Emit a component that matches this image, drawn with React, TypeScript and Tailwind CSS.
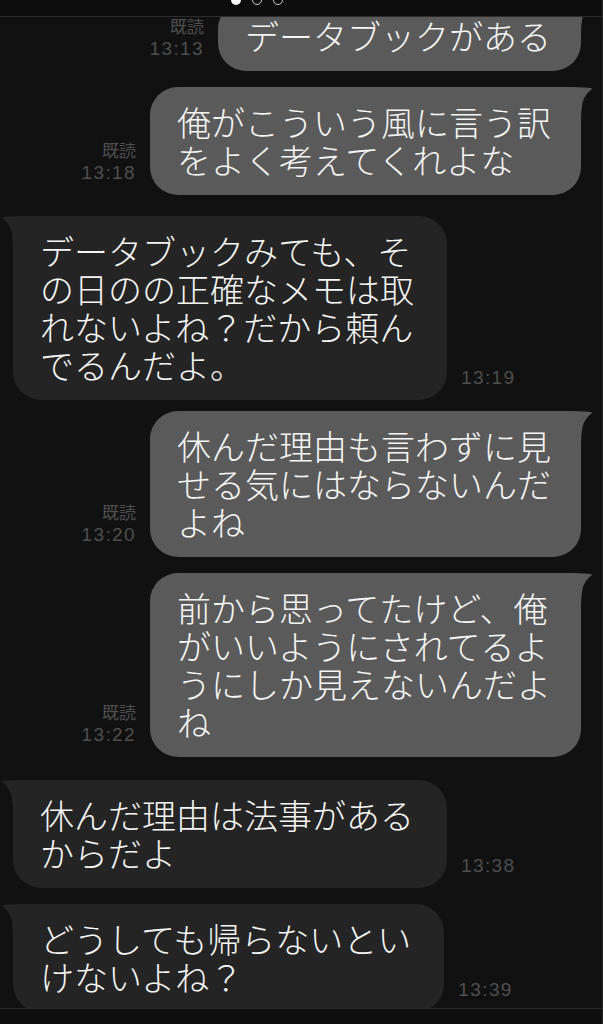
import type { ReactNode } from 'react'

type Msg = {
  side: 'me' | 'them'
  lines: string[]
  time: string
  gap: string
}

const messages: Msg[] = [
  { side: 'me', lines: ['データブックがある'], time: '13:13', gap: 'mt-0' },
  { side: 'me', lines: ['俺がこういう風に言う訳', 'をよく考えてくれよな'], time: '13:18', gap: 'mt-[16px]' },
  {
    side: 'them',
    lines: ['データブックみても、そ', 'の日のの正確なメモは取', 'れないよね？だから頼ん', 'でるんだよ。'],
    time: '13:19',
    gap: 'mt-[21px]',
  },
  { side: 'me', lines: ['休んだ理由も言わずに見', 'せる気にはならないんだ', 'よね'], time: '13:20', gap: 'mt-[11px]' },
  {
    side: 'me',
    lines: ['前から思ってたけど、俺', 'がいいようにされてるよ', 'うにしか見えないんだよ', 'ね'],
    time: '13:22',
    gap: 'mt-[16px]',
  },
  { side: 'them', lines: ['休んだ理由は法事がある', 'からだよ'], time: '13:38', gap: 'mt-[23px]' },
  { side: 'them', lines: ['どうしても帰らないとい', 'けないよね？'], time: '13:39', gap: 'mt-[16px]' },
]

// little horn on the bubble's top corner
function Tail({ color, flip }: { color: string; flip?: boolean }) {
  return (
    <svg
      width="40"
      height="32"
      viewBox="0 0 40 32"
      className={flip ? 'absolute top-0 left-[-12px] -scale-x-100' : 'absolute top-0 right-[-12px]'}
    >
      <path d="M0 0 L20 0 Q32 0 39.5 1.5 Q31 8 29.5 16 Q28 24 28 32 L0 32 Z" fill={color} />
    </svg>
  )
}

function Bubble({ side, children }: { side: Msg['side']; children: ReactNode }) {
  const color = side === 'me' ? '#5a5a5a' : '#242424'
  return (
    <div
      className={
        'relative rounded-[28px] py-[16px] text-[34px] leading-[38px] font-light text-[#f5f5f5] ' +
        (side === 'me' ? 'bg-[#5a5a5a] pl-[27px] pr-[30px]' : 'bg-[#242424] pl-[27px] pr-[33px]')
      }
    >
      <Tail color={color} flip={side === 'them'} />
      <div className="relative">{children}</div>
    </div>
  )
}

function Meta({ time, read }: { time: string; read?: boolean }) {
  return (
    <div className={'flex flex-col pb-[10px] ' + (read ? 'items-end' : 'items-start')}>
      {read && <span className="text-[17px] leading-[22px] text-[#4e4e4e]">既読</span>}
      <span className="font-['Liberation_Sans',sans-serif] text-[19px] leading-[24px] tracking-[1.4px] text-[#4e4e4e]">
        {time}
      </span>
    </div>
  )
}

function Row({ msg }: { msg: Msg }) {
  const text = msg.lines.map((l, i) => (
    <div key={i} className="whitespace-nowrap">
      {l}
    </div>
  ))
  if (msg.side === 'me') {
    return (
      <div className={'flex items-end justify-end gap-[14px] pr-[21px] ' + msg.gap}>
        <Meta time={msg.time} read />
        <Bubble side="me">{text}</Bubble>
      </div>
    )
  }
  return (
    <div className={'flex items-end gap-[14px] pl-[13px] ' + msg.gap}>
      <Bubble side="them">{text}</Bubble>
      <Meta time={msg.time} />
    </div>
  )
}

export default function App() {
  return (
    <div className="flex h-[1024px] w-[603px] flex-col overflow-hidden border-r border-[#262626] bg-[#111111] font-['Noto_Sans_CJK_JP','Noto_Sans_CJK_SC',sans-serif]">
      {/* header strip with page dots */}
      <div className="flex h-[17px] shrink-0 gap-[11px] border-b border-[#2c2c2c] bg-[#0d0d0d] pl-[231px]">
        <span className="-mt-[5px] h-[10px] w-[10px] rounded-full bg-white" />
        <span className="-mt-[5px] h-[10px] w-[10px] rounded-full border border-[#cfcfcf]" />
        <span className="-mt-[5px] h-[10px] w-[10px] rounded-full border border-[#cfcfcf]" />
      </div>

      {/* conversation, scrolled */}
      <div className="min-h-0 flex-1 overflow-hidden">
        <div className="-mt-[16px] flex flex-col">
          {messages.map((m, i) => (
            <Row key={i} msg={m} />
          ))}
        </div>
      </div>

      <div className="h-[16px] shrink-0 border-t border-[#2a2a2a] bg-[#0e0e0e]" />
    </div>
  )
}
